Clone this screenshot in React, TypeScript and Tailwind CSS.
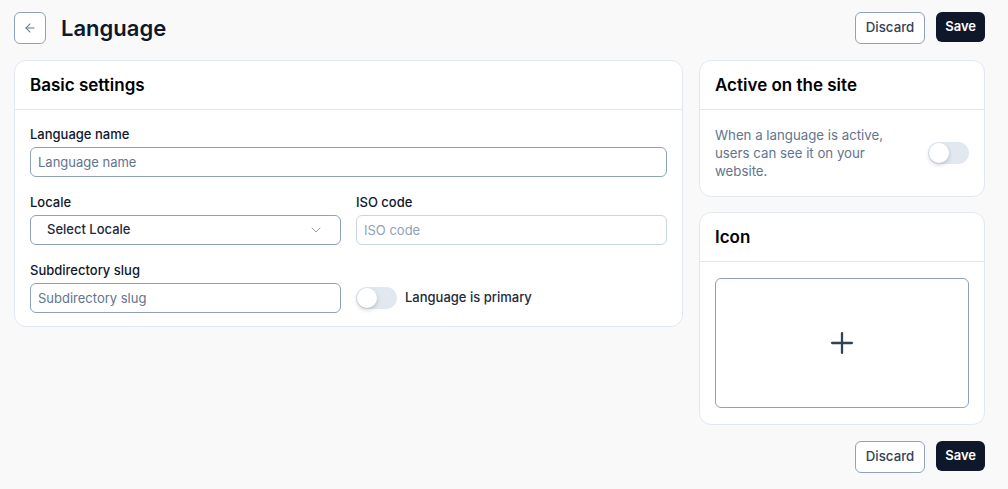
import { ArrowLeft, ChevronDown, Plus } from "lucide-react";

function Toggle() {
  return (
    <button type="button" className="relative h-[22px] w-[41px] shrink-0 rounded-full bg-slate-200">
      <span className="absolute left-[1px] top-[1px] h-5 w-5 rounded-full bg-white shadow-[0_2px_4px_rgba(15,23,42,0.2)]" />
    </button>
  );
}

function Actions() {
  return (
    <div className="flex items-start gap-[11px]">
      <button type="button" className="h-8 rounded-md border border-slate-400 bg-white px-[10px] text-[13.25px] font-medium text-slate-700">
        Discard
      </button>
      <button type="button" className="h-[30px] rounded-md bg-slate-900 px-[9px] text-[13px] font-semibold text-white">
        Save
      </button>
    </div>
  );
}

function Card({ title, children }: { title: string; children: React.ReactNode }) {
  return (
    <section className="rounded-xl border border-slate-200 bg-white">
      <h2 className="border-b border-slate-200 px-[15px] py-[13px] text-[17px] font-semibold leading-[22px] text-black">{title}</h2>
      {children}
    </section>
  );
}

const label = "mb-[5px] block text-[13px] font-medium leading-4 text-slate-900";

export default function App() {
  return (
    <div className="min-h-[489px] bg-[#f9f9f9] pb-4 pl-[14px] pr-[23px] pt-3 font-['Inter',sans-serif] text-slate-900">
      <header className="flex h-8 items-center justify-between">
        <div className="flex items-center gap-[15px]">
          <button type="button" className="flex h-8 w-8 items-center justify-center rounded-md border border-slate-400 bg-white text-slate-500">
            <ArrowLeft className="h-3.5 w-3.5" strokeWidth={1.75} />
          </button>
          <h1 className="text-[22px] font-semibold leading-8 text-slate-900">Language</h1>
        </div>
        <Actions />
      </header>

      <div className="mt-4 grid grid-cols-[669px_1fr] items-start gap-4">
        <Card title="Basic settings">
          <div className="space-y-[17px] px-[15px] pb-[13px] pt-4">
            <div>
              <label className={label}>Language name</label>
              <input
                placeholder="Language name"
                className="h-[30px] w-full rounded-md border border-slate-400 px-[7px] text-[13px] placeholder:text-slate-500"
              />
            </div>
            <div className="grid grid-cols-2 gap-[15px]">
              <div>
                <label className={label}>Locale</label>
                <button type="button" className="flex h-[30px] w-full items-center justify-between rounded-md border border-slate-400 px-4 text-[13px] font-medium text-slate-800">
                  Select Locale
                  <ChevronDown className="h-4 w-4 text-slate-400" strokeWidth={1.5} />
                </button>
              </div>
              <div>
                <label className={label}>ISO code</label>
                <input
                  placeholder="ISO code"
                  className="h-[30px] w-full rounded-md border border-slate-300 px-[7px] text-[13px] placeholder:text-slate-400"
                />
              </div>
            </div>
            <div className="grid grid-cols-2 items-end gap-[15px]">
              <div>
                <label className={label}>Subdirectory slug</label>
                <input
                  placeholder="Subdirectory slug"
                  className="h-[30px] w-full rounded-md border border-slate-400 px-[7px] text-[13px] placeholder:text-slate-500"
                />
              </div>
              <div className="flex h-[30px] items-center gap-2">
                <Toggle />
                <span className="text-[13px] font-medium text-slate-800">Language is primary</span>
              </div>
            </div>
          </div>
        </Card>

        <div className="flex flex-col gap-[15px]">
          <Card title="Active on the site">
            <div className="flex items-center justify-between px-[15px] py-4">
              <p className="w-[180px] text-[13.25px] leading-[18px] text-slate-500">
                When a language is active, users can see it on your website.
              </p>
              <Toggle />
            </div>
          </Card>
          <Card title="Icon">
            <div className="px-[15px] py-4">
              <button type="button" className="flex h-[130px] w-full items-center justify-center rounded-md border border-slate-400 bg-white text-slate-700">
                <Plus className="h-[34px] w-[34px]" strokeWidth={1.6} />
              </button>
            </div>
          </Card>
          <div className="mt-px flex justify-end">
            <Actions />
          </div>
        </div>
      </div>
    </div>
  );
}
